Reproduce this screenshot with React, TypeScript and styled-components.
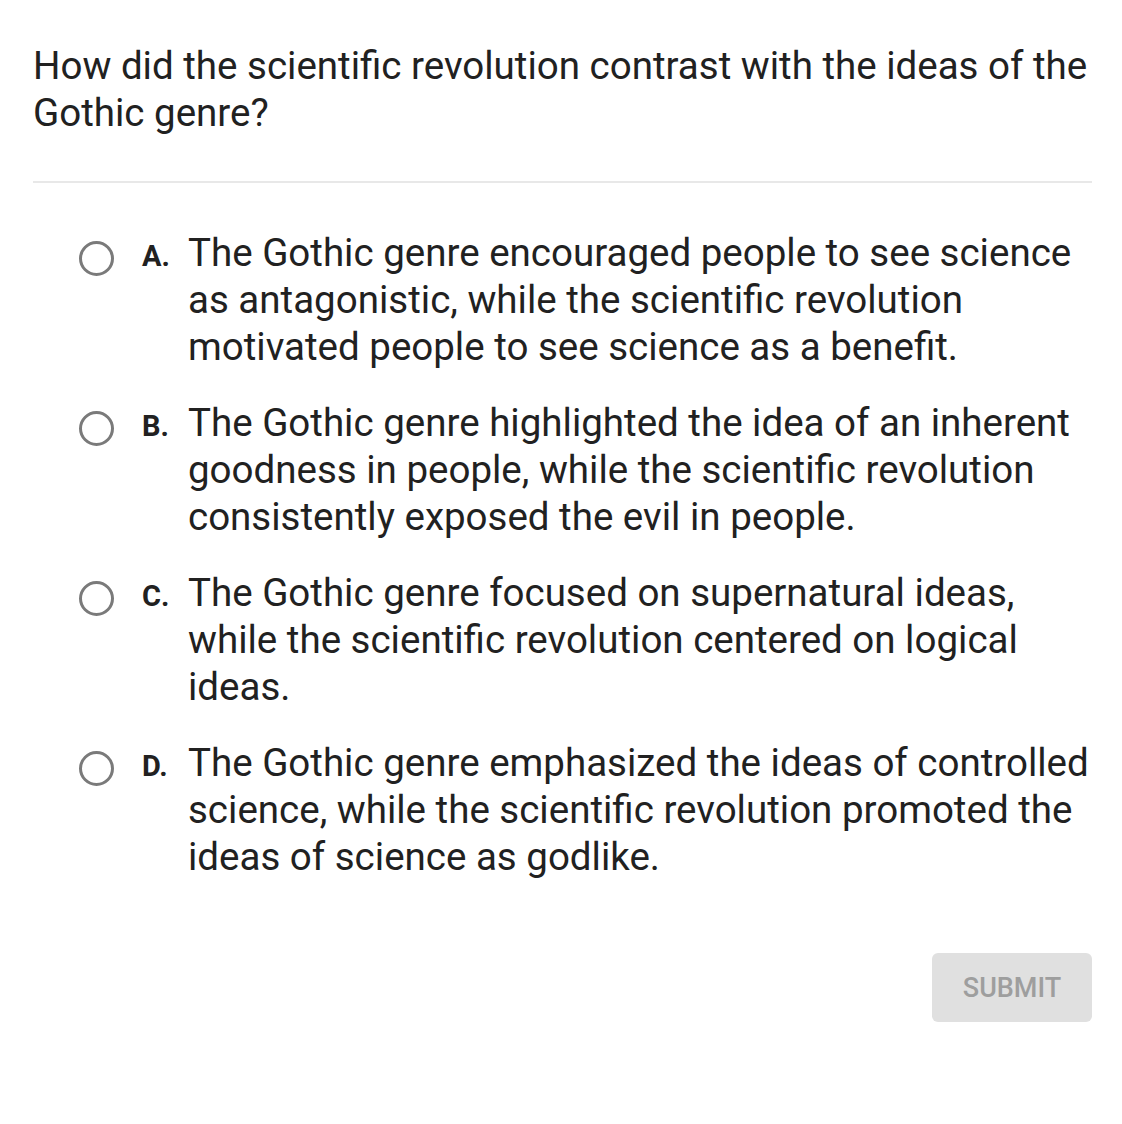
import styled, { createGlobalStyle } from "styled-components";

const GlobalStyle = createGlobalStyle`
    body {
        margin: 0;
        background: #ffffff;
        font-family: Roboto, "Liberation Sans", sans-serif;
        color: #212121;
    }
`

const Page = styled.div`
    width: 1122px;
    height: 1124px;
    padding: 42px 30px 0 33px;
    box-sizing: border-box;
    display: flex;
    flex-direction: column;
`

const Question = styled.p`
    margin: 0;
    font-size: 38.5px;
    line-height: 47px;
    color: #212121;
`

const Divider = styled.hr`
    margin: 45px 0 0 0;
    border: none;
    border-top: 2px solid #e8e8e8;
`

const Options = styled.div`
    display: flex;
    flex-direction: column;
    gap: 29px;
    margin-top: 46px;
    padding-left: 46px;
`

const Option = styled.label`
    display: flex;
    align-items: baseline;
    cursor: pointer;
`

const Radio = styled.span`
    flex: none;
    align-self: flex-start;
    width: 29px;
    height: 29px;
    border: 3px solid #7a7a7a;
    border-radius: 50%;
    margin-top: 12px;
    margin-right: 28px;
`

const Letter = styled.span`
    flex: none;
    width: 46px;
    font-size: 29px;
    font-weight: 700;
    color: #212121;
`

const OptionText = styled.span`
    font-size: 38.5px;
    line-height: 47px;
    color: #212121;
`

const Footer = styled.div`
    display: flex;
    justify-content: flex-end;
    margin-top: 73px;
`

const SubmitButton = styled.button`
    width: 160px;
    height: 69px;
    border: none;
    border-radius: 6px;
    background: #e0e0e0;
    color: #9e9e9e;
    font-family: Roboto, "Liberation Sans", sans-serif;
    font-size: 27px;
    font-weight: 500;
`

const options = [
    { letter: "A", text: "The Gothic genre encouraged people to see science as antagonistic, while the scientific revolution motivated people to see science as a benefit." },
    { letter: "B", text: "The Gothic genre highlighted the idea of an inherent goodness in people, while the scientific revolution consistently exposed the evil in people." },
    { letter: "C", text: "The Gothic genre focused on supernatural ideas, while the scientific revolution centered on logical ideas." },
    { letter: "D", text: "The Gothic genre emphasized the ideas of controlled science, while the scientific revolution promoted the ideas of science as godlike." },
]

export default function App() {
    return (
        <>
            <GlobalStyle />
            <Page>
                <Question>How did the scientific revolution contrast with the ideas of the Gothic genre?</Question>
                <Divider />
                <Options>
                    {options.map((o) => (
                        <Option key={o.letter}>
                            <Radio />
                            <Letter>{o.letter}.</Letter>
                            <OptionText>{o.text}</OptionText>
                        </Option>
                    ))}
                </Options>
                <Footer>
                    <SubmitButton>SUBMIT</SubmitButton>
                </Footer>
            </Page>
        </>
    )
}
